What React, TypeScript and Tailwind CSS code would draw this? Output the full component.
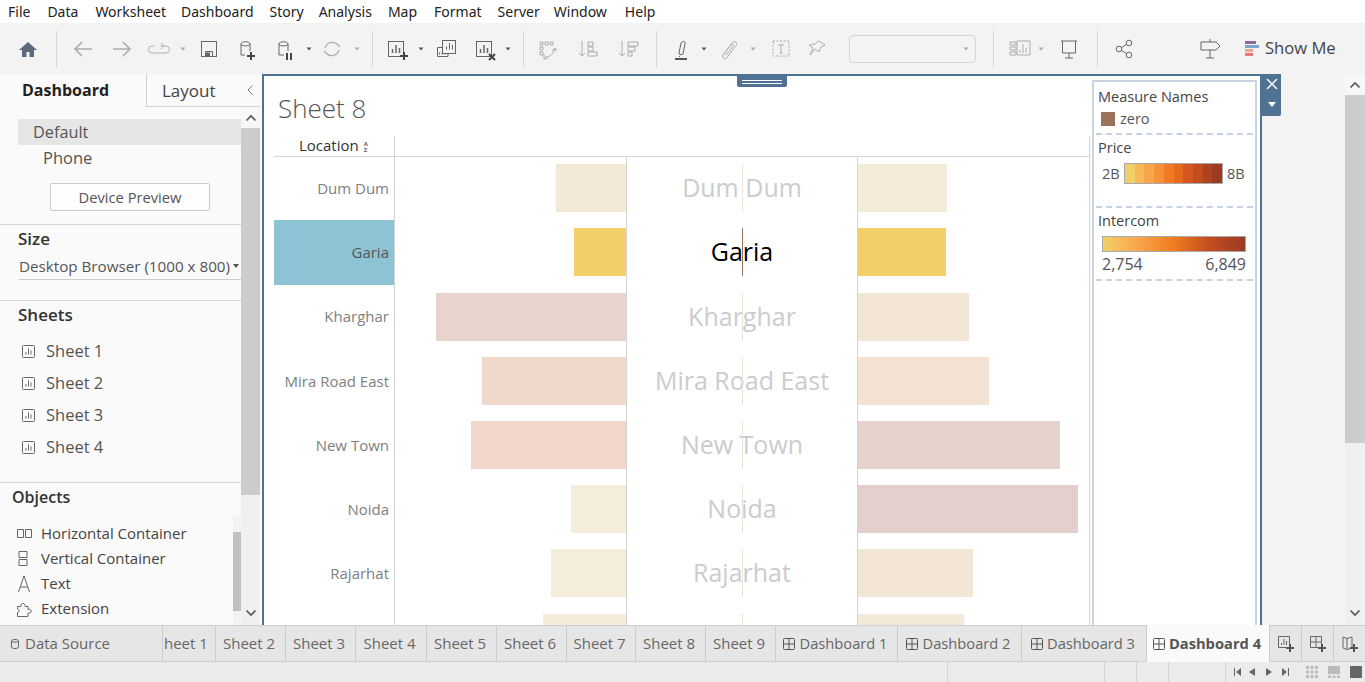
import React from "react";

const I = ({ children, o = 1 }: { children: React.ReactNode; o?: number }) => (
  <svg viewBox="0 0 24 24" width="24" height="24" fill="none" stroke="#666" strokeWidth="1" opacity={o} className="block shrink-0">
    {children}
  </svg>
);

const Sep = ({ className }: { className: string }) => <div className={`w-px h-[36px] bg-[#d4d4d4] shrink-0 ${className}`} />;

const Caret = ({ className, dark }: { className: string; dark?: boolean }) => (
  <svg viewBox="0 0 10 6" width="10" height="6" className={`block shrink-0 ${className}`}>
    <path d="M2.5 1.5h5L5 4.5z" fill={dark ? "#555" : "#aaa"} />
  </svg>
);

const Chev = ({ up }: { up?: boolean }) => (
  <svg viewBox="0 0 12 8" width="12" height="8" className="block">
    <path d={up ? "M1.5 6.5L6 2l4.5 4.5" : "M1.5 1.5L6 6l4.5-4.5"} fill="none" stroke="#555" strokeWidth="1.6" />
  </svg>
);

const SheetIcon = () => (
  <svg viewBox="0 0 14 14" width="14" height="14" fill="none" stroke="#666" className="block shrink-0">
    <rect x="0.5" y="1.5" width="12" height="12" rx="1" />
    <path d="M4 10.5V8M6.5 10.5V4.5M9 10.5V6.5" />
  </svg>
);

const GridIcon = () => (
  <svg viewBox="0 0 12 12" width="12" height="12" fill="none" stroke="#555" className="block shrink-0">
    <rect x="0.5" y="0.5" width="11" height="11" rx="1" />
    <path d="M6 .5v11M.5 6h11" />
  </svg>
);

const rows = [
  { name: "Dum Dum", l: 70, r: 89, lc: "#f4e9d9", rc: "#f4ebda" },
  { name: "Garia", l: 52, r: 88, lc: "#f3cf67", rc: "#f3cf67", active: true },
  { name: "Kharghar", l: 190, r: 111, lc: "#e7d4cd", rc: "#f4e6d6" },
  { name: "Mira Road East", l: 144, r: 131, lc: "#f1d8cc", rc: "#f4e3d4" },
  { name: "New Town", l: 155, r: 202, lc: "#f0d6cb", rc: "#e6d3cd" },
  { name: "Noida", l: 55, r: 220, lc: "#f4eddb", rc: "#e3d0cd" },
  { name: "Rajarhat", l: 75, r: 115, lc: "#f4eddb", rc: "#f4e6d6" },
  { name: "", l: 83, r: 106, lc: "#f4ebda", rc: "#f4e8d8" },
];

const steps = ["#f3cf67", "#f6b95a", "#f9a54c", "#f4913a", "#f07b22", "#e66a1e", "#d5571f", "#c24d20", "#ae4321", "#9c3a22"];

const tabs = [
  { t: "Sheet 2", c: "w-[70px]" },
  { t: "Sheet 3", c: "w-[70px]" },
  { t: "Sheet 4", c: "w-[71px]" },
  { t: "Sheet 5", c: "w-[70px]" },
  { t: "Sheet 6", c: "w-[70px]" },
  { t: "Sheet 7", c: "w-[69px]" },
  { t: "Sheet 8", c: "w-[70px]" },
  { t: "Sheet 9", c: "w-[70px]" },
];

const dashTabs = [
  { t: "Dashboard 1", c: "w-[122px]" },
  { t: "Dashboard 2", c: "w-[124px]" },
  { t: "Dashboard 3", c: "w-[125px]" },
];

const menu = [
  { t: "File", c: "" },
  { t: "Data", c: "ml-px" },
  { t: "Worksheet", c: "ml-px" },
  { t: "Dashboard", c: "-ml-px" },
  { t: "Story", c: "" },
  { t: "Analysis", c: "-ml-px" },
  { t: "Map", c: "" },
  { t: "Format", c: "ml-px" },
  { t: "Server", c: "" },
  { t: "Window", c: "-ml-[2px]" },
  { t: "Help", c: "ml-[2px]" },
];

const Toolbar = () => (
  <div className="h-[51px] bg-[#f3f3f3] flex items-center pl-4 shrink-0">
    <svg viewBox="0 0 24 24" width="24" height="24" className="block shrink-0">
      <path d="M12 5L3 13h3v7h4.5v-5h3v5H18v-7h3z" fill="#5c6b7b" />
    </svg>
    <Sep className="ml-[16px]" />
    <div className="ml-[14px] shrink-0">
      <I o={0.5}><path d="M21 12H4M11 5l-7 7 7 7" strokeWidth="1.6" /></I>
    </div>
    <div className="ml-[15px] shrink-0">
      <I o={0.5}><path d="M3 12h17M13 5l7 7-7 7" strokeWidth="1.6" /></I>
    </div>
    <div className="ml-[13px] shrink-0">
      <I o={0.45}><path d="M8 9H5a3 3 0 000 7h14a3 3 0 000-7h-6M14 6l3 3-3 3" /></I>
    </div>
    <Caret className="ml-[7px]" />
    <div className="ml-[9px] shrink-0">
      <I><rect x="4.500" y="4.500" width="15" height="15" /><path d="M8.500 19.500v-5h7v5" /><rect x="9.500" y="16" width="3" height="3.500" fill="#666" /></I>
    </div>
    <div className="ml-[15px] shrink-0">
      <I><path d="M5 7c0-3 9-3 9 0v7M5 7v11h4M5 7c0 2.500 9 2.500 9 0" /><path d="M15 15v8M11 19h8" strokeWidth="2" stroke="#444" /></I>
    </div>
    <div className="ml-[13px] shrink-0">
      <I><path d="M6 7c0-3 9-3 9 0v7M6 7v11h5M6 7c0 2.500 9 2.500 9 0" /><path d="M14 16v7M18 16v7" strokeWidth="2" stroke="#444" /></I>
    </div>
    <Caret className="ml-[7px]" dark />
    <div className="ml-[6px] shrink-0">
      <I o={0.5}><path d="M5 11a7.500 7.500 0 0113-3l2 2M19 13a7.500 7.500 0 01-13 3l-2-2" strokeWidth="1.2" /></I>
    </div>
    <Caret className="ml-[8px]" />
    <Sep className="ml-[10px]" />
    <div className="ml-[12px] shrink-0">
      <I><rect x="3.500" y="4.500" width="15" height="15" /><path d="M7.500 16v-4M11 16V8M14.500 16v-5" strokeWidth="1.500" /><path d="M19 15v8M15 19h8" strokeWidth="2" stroke="#444" /></I>
    </div>
    <Caret className="ml-[7px]" dark />
    <div className="ml-[8px] shrink-0">
      <I><rect x="8.500" y="3.500" width="13" height="13" /><path d="M12.500 12.500v-3M15.500 12.500V6M18.500 12.500V8" /><path d="M8 10.500H3.500v9H14v-3" /><path d="M5.500 17.500v-2M8 17.500v-2M11 17.500v-1" /></I>
    </div>
    <div className="ml-[15px] shrink-0">
      <I><rect x="3.500" y="4.500" width="15" height="15" /><path d="M7.500 16v-4M11 16V8M14.500 16v-5" strokeWidth="1.500" /><path d="M16 17l6 6M22 17l-6 6" strokeWidth="2" stroke="#444" /></I>
    </div>
    <Caret className="ml-[6px]" dark />
    <Sep className="ml-[10px]" />
    <div className="ml-[12px] shrink-0">
      <I o={0.5}><path d="M4 5h3v3H4zM9 5h3v3H9zM14 5h3v3h-3zM4 10h3v3H4zM4 15h3v3H4zM9 20c5 0 9-3 10-9M16 14l3-3 2 3M8 17v5l4-1" /></I>
    </div>
    <div className="ml-[16px] shrink-0">
      <I o={0.5}><path d="M6 4v15M3 16l3 3 3-3M12 5h5v4h-5zM12 10h5v4h-5zM12 15h9v4h-9z" /></I>
    </div>
    <div className="ml-[16px] shrink-0">
      <I o={0.5}><path d="M6 4v15M3 16l3 3 3-3M12 5h10v4H12zM12 10h7v4h-7zM12 15h4v4h-4z" /></I>
    </div>
    <Sep className="ml-[16px]" />
    <div className="ml-[14px] shrink-0">
      <I><path d="M8 16l2-10c1-2.500 5-2 4 1l-2 10-3 1zM9 19l-1 1" /><path d="M4 22h12" strokeWidth="2" stroke="#555" /></I>
    </div>
    <Caret className="ml-[4px]" dark />
    <div className="ml-[8px] shrink-0">
      <I o={0.5}><path d="M7 17l8-11c2-3 6-.5 4 2.500l-9 12c-2 2.500-6 0-4-2.500l8-10.500c1-1 3 0 2 1.500l-7 9.500" /></I>
    </div>
    <Caret className="ml-[7px]" />
    <div className="ml-[11px] shrink-0">
      <I o={0.5}><rect x="4" y="4" width="16" height="15" strokeDasharray="2 1.500" /><path d="M9 8h6M12 8v8M10.500 16h3" /></I>
    </div>
    <div className="ml-[12px] shrink-0">
      <I o={0.5}><path d="M14 4l6 4-4 2-2 5-4-3-5 6 3-7-4-3 6-1z" /></I>
    </div>
    <div className="ml-[20px] w-[127px] h-[28px] border border-[#d4d4d4] rounded-sm flex items-center justify-end pr-1 shrink-0">
      <Caret className="" />
    </div>
    <Sep className="ml-[17px]" />
    <div className="ml-[14px] shrink-0">
      <I o={0.5}><path d="M2 5h6v3H2zM2 10h6v3H2zM2 15h6v3H2zM9 4h13v14H9zM12 16v-3M15 16V7M18 16v-5" /></I>
    </div>
    <Caret className="ml-[4px]" />
    <div className="ml-[11px] shrink-0">
      <I><path d="M4 4h16M5.500 4v12h13V4M12 16v5M8 21h8" /></I>
    </div>
    <Sep className="ml-[16px]" />
    <div className="ml-[14px] shrink-0">
      <I><circle cx="7" cy="12" r="2.800" /><circle cx="17" cy="6" r="2.800" /><circle cx="17" cy="18" r="2.800" /><path d="M9.500 10.500l5-3M9.500 13.500l5 3" /></I>
    </div>
    <div className="ml-[62px] shrink-0">
      <I><path d="M3 5h15l4 4-4 4H3zM12 5V2M12 13v8M8 21h8" /></I>
    </div>
    <div className="ml-[23px] flex items-center shrink-0">
      <svg viewBox="0 0 14 15" width="14" height="15" className="block shrink-0">
        <rect x="0" y="0" width="11" height="3" fill="#8a6d98" />
        <rect x="0" y="4" width="14" height="3" fill="#7ba6cf" />
        <rect x="0" y="8" width="8" height="3" fill="#f4a77a" />
        <rect x="0" y="12" width="8" height="3" fill="#f0717f" />
      </svg>
      <span className="ml-[6px] text-[16.600px] leading-none text-[#444]">Show Me</span>
    </div>
  </div>
);

const LeftPanel = () => (
  <aside className="w-[262px] shrink-0 h-full flex bg-[#fafafa] relative">
    <div className="w-[241px] shrink-0 flex flex-col overflow-hidden">
      <div className="h-[33px] flex shrink-0 w-[262px]">
        <div className="w-[146px] pl-[22px] pt-[4px] text-[16px] leading-[24px] font-bold text-[#222]">Dashboard</div>
        <div className="w-[116px] bg-[#fafafa] border-l border-b border-[#d4d4d4] pl-[15px] pt-[5px] text-[17px] leading-[24px] text-[#444]">Layout</div>
      </div>
      <div className="h-[26px] ml-[18px] mt-[12px] bg-[#e6e6e6] pl-[15px] text-[16.300px] leading-[26px] text-[#555] shrink-0">Default</div>
      <div className="h-[26px] ml-[43px] text-[16.500px] leading-[26px] text-[#555] shrink-0">Phone</div>
      <div className="ml-[50px] mt-[12px] w-[160px] h-[28px] bg-white/50 border border-[#ccc] rounded-[2px] text-[14.700px] leading-[26px] text-center text-[#555] shrink-0">Device Preview</div>
      <div className="border-t border-[#d4d4d4] mt-[13px] shrink-0" />
      <div className="pl-[18px] mt-[2px] text-[17px] leading-[24px] font-semibold text-[#333] shrink-0">Size</div>
      <div className="ml-[19px] mt-[2px] h-[27px] pb-[1px] border-b border-[#ccc] text-[15.200px] leading-[24px] text-[#555] whitespace-nowrap shrink-0 flex items-center">
        Desktop Browser (1000 x 800)
        <svg viewBox="0 0 6 4" width="6" height="4" className="ml-[3px] block shrink-0"><path d="M0 0h6L3 4z" fill="#555" /></svg>
      </div>
      <div className="border-t border-[#d4d4d4] mt-[20px] shrink-0" />
      <div className="pl-[18px] mt-[2px] text-[17px] leading-[24px] font-semibold text-[#333] shrink-0">Sheets</div>
      <div className="mt-[8px] flex flex-col shrink-0">
        {["Sheet 1", "Sheet 2", "Sheet 3", "Sheet 4"].map((s) => (
          <div key={s} className="h-[32px] flex items-center pl-[22px] text-[16.500px] text-[#555]">
            <SheetIcon />
            <span className="ml-[10px]">{s}</span>
          </div>
        ))}
      </div>
      <div className="border-t border-[#d4d4d4] mt-[19px] shrink-0" />
      <div className="pl-[12px] mt-[2px] text-[16px] leading-[24px] font-semibold text-[#333] shrink-0">Objects</div>
      <div className="flex mt-[6px] min-h-0 flex-1">
        <div className="flex-1 pt-[6px] flex flex-col">
          {[
            { t: "Horizontal Container", i: <path d="M1.500 4.500h6v8h-6zM9.500 4.500h6v8h-6z" /> },
            { t: "Vertical Container", i: <path d="M3 1.500h8v6H3zM3 9.500h8v6H3z" /> },
            { t: "Text", i: <path d="M2.500 17L8 1l5.500 16M4.500 12h7" /> },
            { t: "Extension", i: <path d="M1.500 16.500v-4c2 0 2-3.500 0-3.500V6.500h3.500c-1-4 5-4 4 0h3v3c2-1 4 .5 3 2.500s-3 1-3 1v3.500z" /> },
          ].map((o) => (
            <div key={o.t} className="h-[25px] flex items-center pl-[16px] text-[15px] text-[#444]">
              <svg viewBox="0 0 17 18" width="17" height="18" fill="none" stroke="#666" className="block shrink-0">{o.i}</svg>
              <span className="ml-[8px]">{o.t}</span>
            </div>
          ))}
        </div>
        <div className="w-[8px] shrink-0 bg-[#f3f3f3] pt-[17px]">
          <div className="h-[79px] bg-[#c0c0c0]" />
        </div>
      </div>
    </div>
    <div className="w-[19px] shrink-0 mt-[32px] border-t border-[#d4d4d4] bg-[#f0f0f0] flex flex-col">
      <div className="h-[21px] bg-[#f7f7f7] flex items-center justify-center shrink-0"><Chev up /></div>
      <div className="h-[367px] bg-[#cccccc] shrink-0" />
      <div className="flex-1 flex items-end justify-center pb-[8px]"><Chev /></div>
    </div>
    <div className="absolute right-[8px] top-[10px]">
      <svg viewBox="0 0 8 12" width="8" height="12" fill="none" stroke="#777" className="block"><path d="M6.500 1.500L2 6l4.500 4.500" /></svg>
    </div>
  </aside>
);

const Chart = () => (
  <div className="w-[816px] ml-[10px] shrink-0 flex flex-col h-full overflow-hidden">
    <div className="h-[60px] shrink-0 flex items-center pl-[4px] text-[26px] leading-none font-light text-[#555] pt-[4px]">Sheet 8</div>
    <div className="h-[21px] shrink-0 flex border-b border-[#d4d4d4]">
      <div className="w-[121px] shrink-0 border-r border-[#d4d4d4] flex items-center pl-[25px] pb-[2px] text-[15px] font-medium text-[#333] -mb-px">
        Location
        <span className="ml-[5px] flex flex-col text-[6px] leading-[6px] font-bold text-[#666] mt-[3px]">
          <span>A</span>
          <span>Z</span>
        </span>
      </div>
      <div className="flex-1 border-r border-[#d4d4d4]" />
    </div>
    <div className="-mt-[0.800px] flex flex-col shrink-0">
      {rows.map((r, i) => (
        <div key={i} className="h-[64.200px] shrink-0 flex">
          <div className={`w-[120px] shrink-0 flex items-center justify-end pr-[5px] text-[15px] ${r.active ? "bg-[#8dc3d4] text-[#555]" : "text-[#808080]"}`}>
            {r.name}
          </div>
          <div className="w-[233px] shrink-0 flex items-center justify-end border-l border-r border-[#d4d4d4] box-border">
            <div className="h-[48px]" style={{ width: r.l, backgroundColor: r.lc }} />
          </div>
          <div className="w-[230px] shrink-0 relative flex items-center justify-center">
            <span className={`text-[25px] font-medium leading-none whitespace-nowrap -mt-px ${r.active ? "text-black" : "text-[#cccccc]"}`}>{r.name}</span>
            <div className={`absolute left-[115px] top-[8px] h-[48px] w-px ${r.active ? "bg-[#9b735b]" : "bg-[#e9e3de]"}`} />
          </div>
          <div className="flex-1 flex items-center border-l border-r border-[#d4d4d4]">
            <div className="h-[48px]" style={{ width: r.r, backgroundColor: r.rc }} />
          </div>
        </div>
      ))}
    </div>
  </div>
);

const Dash = () => <div className="h-0 border-t-2 border-dashed border-[#c5d3e5] mx-[2px] shrink-0" />;

const Legend = () => (
  <div className="w-[165px] ml-[2px] mt-[4px] shrink-0 border-2 border-[#c9d6e2] border-b-0 flex flex-col text-[14.500px] text-[#555] px-0">
    <div className="h-[51px] shrink-0 pl-[4px] pt-[4px] leading-[22px]">
      <div className="text-[#444]">Measure Names</div>
      <div className="flex items-center h-[21px] pl-[3px]">
        <div className="w-[14px] h-[14px] bg-[#9b735b]" />
        <span className="ml-[5px]">zero</span>
      </div>
    </div>
    <Dash />
    <div className="h-[71px] shrink-0 pl-[4px] pt-[2px]">
      <div className="leading-[22px] text-[#444]">Price</div>
      <div className="flex items-center mt-[4px] pl-[4px]">
        <span className="w-[22px]">2B</span>
        <div className="flex w-[99px] h-[21px] border border-[#aaa] shrink-0">
          {steps.map((c) => (
            <div key={c} className="flex-1" style={{ backgroundColor: c }} />
          ))}
        </div>
        <span className="ml-[4px]">8B</span>
      </div>
    </div>
    <Dash />
    <div className="h-[71px] shrink-0 pl-[4px] pt-[2px]">
      <div className="leading-[22px] text-[#444]">Intercom</div>
      <div className="ml-[4px] mt-[4px] w-[144px] h-[16px] border border-[#aaa] bg-[linear-gradient(to_right,#f3cf67,#f9a54c_25%,#f07b1e_50%,#c24d20_75%,#9c3a22)]" />
      <div className="ml-[4px] w-[144px] flex justify-between leading-[24px] text-[16px]">
        <span>2,754</span>
        <span>6,849</span>
      </div>
    </div>
    <Dash />
  </div>
);

const TabBar = () => (
  <div className="h-[37px] shrink-0 flex bg-[#e6e6e6] border-t border-b border-[#d0d0d0] text-[14.700px] text-[#666]">
    <div className="w-[163px] shrink-0 border-r border-[#ccc] flex items-center pl-[11px]">
      <svg viewBox="0 0 8 10" width="8" height="10" fill="none" stroke="#666" className="block shrink-0">
        <path d="M.5 2c0-2 7-2 7 0v6c0 2-7 2-7 0zM.5 2c0 1.500 7 1.500 7 0" />
      </svg>
      <span className="ml-[6px] text-[15px]">Data Source</span>
    </div>
    <div className="w-[53px] shrink-0 border-r border-[#ccc] flex items-center pl-[1px] whitespace-nowrap text-[15px]">heet 1</div>
    {tabs.map((t) => (
      <div key={t.t} className={`${t.c} shrink-0 border-r border-[#ccc] flex items-center justify-center pr-[3px] text-[15px]`}>{t.t}</div>
    ))}
    {dashTabs.map((t) => (
      <div key={t.t} className={`${t.c} shrink-0 border-r border-[#ccc] flex items-center justify-center pr-[2px]`}>
        <GridIcon />
        <span className="ml-[4px]">{t.t}</span>
      </div>
    ))}
    <div className="w-[123px] shrink-0 -mt-px -mb-px border-r border-[#ccc] bg-[#fafafa] flex items-center justify-center pr-[2px] font-bold text-[#555]">
      <GridIcon />
      <span className="ml-[4px]">Dashboard 4</span>
    </div>
    {[
      <path key="a" d="M1.500 1.500h11v11h-11zM4.500 10V8M7 10V4M9.500 10V6" />,
      <path key="b" d="M1.500 1.500h11v11h-11zM7 1.500v11M1.500 7h11" />,
      <path key="c" d="M2 2l4 1.500L11 2v11l-5 1.500L2 13zM6 3.500v11" />,
    ].map((p, i) => (
      <div key={i} className="w-[32px] shrink-0 border-r border-[#ccc] last:border-r-0 flex items-center justify-center">
        <svg viewBox="0 0 18 18" width="18" height="18" fill="none" stroke="#666" className="block">
          {p}
          <path d="M13 9v8M9 13h8" stroke="#555" strokeWidth="2" />
        </svg>
      </div>
    ))}
  </div>
);

const StatusBar = () => (
  <div className="flex-1 flex bg-[#ebebeb]">
    <div className="w-[948px] shrink-0 border-r border-[#d4d4d4]" />
    <div className="w-[157px] shrink-0 border-r border-[#d4d4d4]" />
    <div className="w-[32px] shrink-0 border-r border-[#d4d4d4]" />
    <div className="w-[32px] shrink-0 border-r border-[#d4d4d4]" />
    <div className="w-[57px] shrink-0 border-r border-[#d4d4d4]" />
    <div className="flex-1 flex items-center pl-[7px]">
      <svg viewBox="0 0 64 10" width="64" height="10" className="block shrink-0" fill="#666">
        <path d="M1 1h1v8H1zM8 1v8L3 5zM22 1v8l-6-4zM33 1v8l6-4zM49 1v8l5-4zM55 1h1v8h-1z" />
      </svg>
      <svg viewBox="0 0 12 12" width="12" height="12" className="ml-[9px] block shrink-0" fill="#bbb">
        <path d="M0 0h3v3H0zM4.500 0h3v3h-3zM9 0h3v3H9zM0 4.500h3v3H0zM4.500 4.500h3v3h-3zM9 4.500h3v3H9zM0 9h3v3H0zM4.500 9h3v3h-3zM9 9h3v3H9z" />
      </svg>
      <svg viewBox="0 0 12 12" width="12" height="12" className="ml-[10px] block shrink-0" fill="#bbb">
        <path d="M0 0h12v8H0zM0 9.500h3V12H0zM4.500 9.500h3V12h-3zM9 9.500h3V12H9z" />
      </svg>
      <div className="ml-[10px] w-[12px] h-[12px] bg-[#666] shrink-0" />
    </div>
  </div>
);

export default function App() {
  return (
    <div className="w-[1365px] h-[682px] overflow-hidden flex flex-col bg-white font-['Open_Sans','Noto_Sans',sans-serif]">
      <div className="h-[23px] shrink-0 flex items-center pl-2 gap-[16px] text-[14px] text-[#222] bg-white font-['Noto_Sans','Open_Sans',sans-serif]">
        {menu.map((m) => (
          <span key={m.t} className={m.c}>{m.t}</span>
        ))}
      </div>
      <Toolbar />
      <div className="h-[551px] shrink-0 flex overflow-hidden relative">
        <LeftPanel />
        <div className="w-[1000px] shrink-0 h-full border-2 border-b-0 border-[#4f7192] bg-white flex relative">
          <Chart />
          <Legend />
          <div className="absolute left-[473px] top-0 w-[50px] h-[11px] bg-[#4f7192] rounded-b-[2px] flex flex-col items-center justify-center gap-[2px]">
            <div className="w-[40px] h-px bg-white" />
            <div className="w-[40px] h-px bg-white" />
          </div>
        </div>
        <div className="flex-1 bg-[#f3f3f3] relative">
          <div className="w-[19px] h-[42px] bg-[#4f7192] rounded-br-[2px] flex flex-col items-center pt-[4px]">
            <svg viewBox="0 0 12 12" width="12" height="12" fill="none" stroke="#fff" strokeWidth="1.500" className="block">
              <path d="M1 1l10 10M11 1L1 11" />
            </svg>
            <svg viewBox="0 0 8 5" width="8" height="5" className="block mt-[12px]"><path d="M0 0h8L4 5z" fill="#fff" /></svg>
          </div>
        </div>
        <div className="w-[20px] shrink-0 bg-[#f0f0f0] flex flex-col">
          <div className="h-[21px] bg-[#f7f7f7] flex items-center justify-center shrink-0"><Chev up /></div>
          <div className="h-[348px] bg-[#cccccc] shrink-0" />
          <div className="flex-1 flex items-end justify-center pb-[8px]"><Chev /></div>
        </div>
      </div>
      <TabBar />
      <StatusBar />
    </div>
  );
}
